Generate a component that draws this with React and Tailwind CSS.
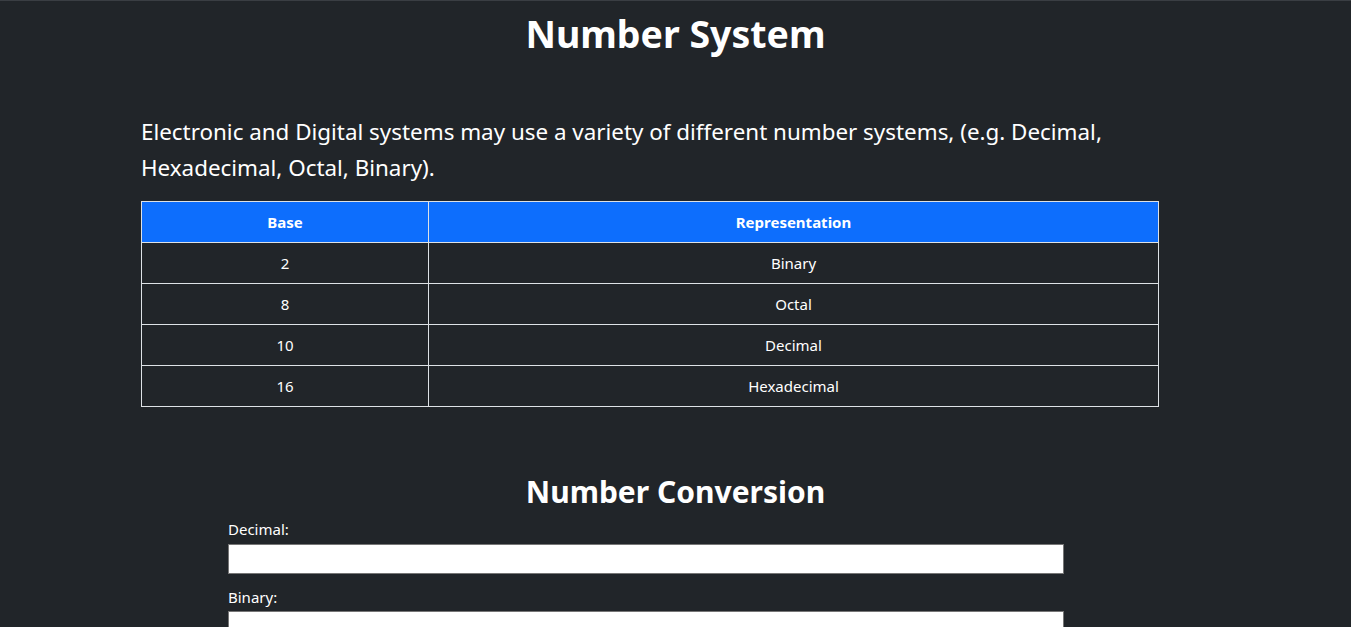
import React from 'react';

const rows = [
  { base: '2', name: 'Binary' },
  { base: '8', name: 'Octal' },
  { base: '10', name: 'Decimal' },
  { base: '16', name: 'Hexadecimal' },
];

export default function App() {
  return (
    <div
      className="min-h-screen bg-[#212529] text-white border-t border-[#3a3e43]"
      style={{ fontFamily: '"Noto Sans", "Open Sans", sans-serif' }}
    >
      <h1 className="text-center font-bold text-[37.5px] leading-[48px] pt-[9px]">Number System</h1>

      <div className="ml-[141px] w-[1018px]">
        <p className="mt-[56px] text-[22.4px] leading-[36px]">
          Electronic and Digital systems may use a variety of different number systems, (e.g. Decimal,
          Hexadecimal, Octal, Binary).
        </p>

        {/* Bases */}
        <table className="mt-[15px] w-full border-collapse text-[15px]">
          <thead>
            <tr className="bg-[#0d6efd] h-[41px]">
              <th className="w-[287px] border border-[#dee2e6] font-bold">Base</th>
              <th className="border border-[#dee2e6] font-bold">Representation</th>
            </tr>
          </thead>
          <tbody>
            {rows.map((r) => (
              <tr key={r.base} className="h-[41px]">
                <td className="border border-[#dee2e6] text-center">{r.base}</td>
                <td className="border border-[#dee2e6] text-center">{r.name}</td>
              </tr>
            ))}
          </tbody>
        </table>
      </div>

      <h2 className="mt-[65px] text-center font-bold text-[30px] leading-[40px]">Number Conversion</h2>

      <div className="ml-[228px] w-[836px] text-[15px]">
        <label className="block leading-[22px] mt-[6px]">Decimal:</label>
        <input className="block mt-[4px] w-full h-[30px] bg-white border border-[#767676] text-black" />
        <label className="block leading-[22px] mt-[12px]">Binary:</label>
        <input className="block mt-[3px] w-full h-[30px] bg-white border border-[#767676] text-black" />
      </div>
    </div>
  );
}
